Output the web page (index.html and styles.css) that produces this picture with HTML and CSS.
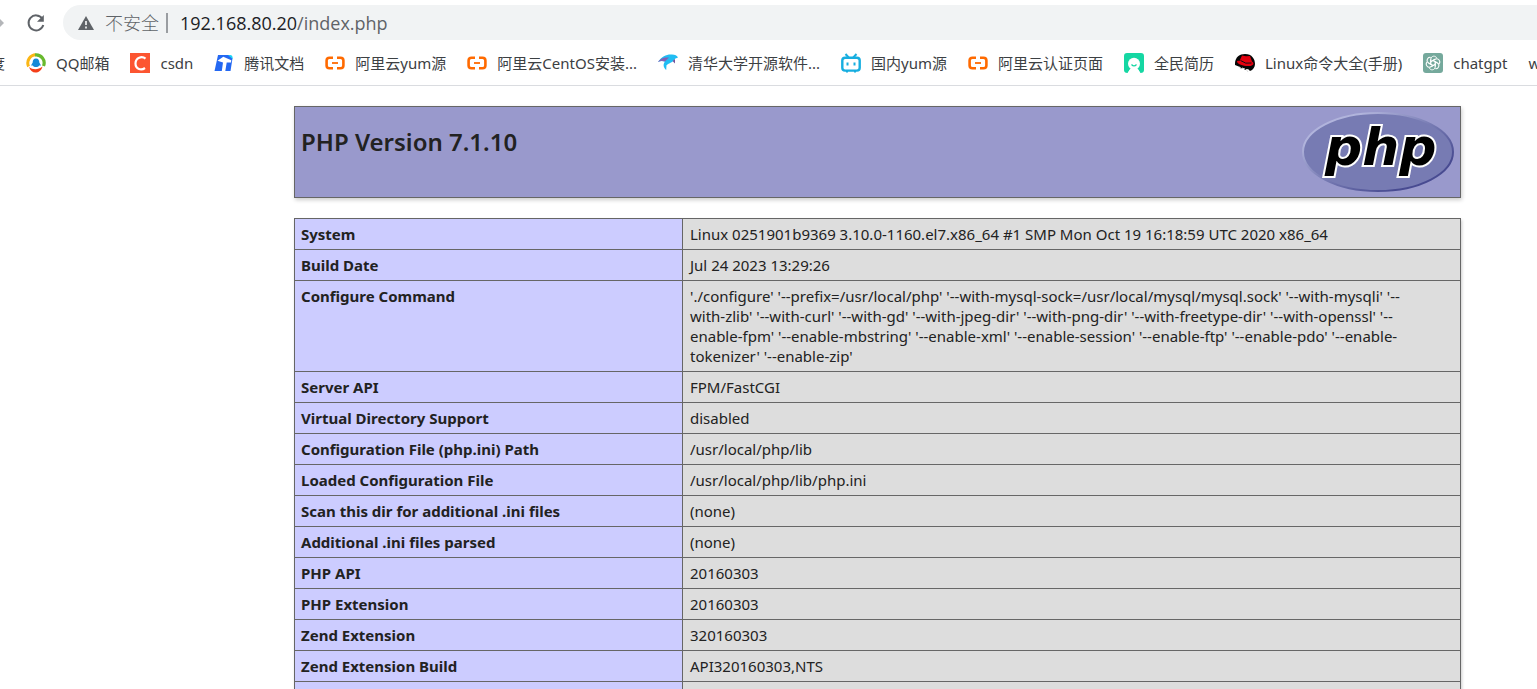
FILE: index.html
```
<!DOCTYPE html>
<html lang="zh-CN">
<head>
<meta charset="utf-8">
<title>phpinfo()</title>
<link rel="stylesheet" href="styles.css">
</head>
<body>
<svg class="defs" width="0" height="0" aria-hidden="true">
  <symbol id="aliyun" viewBox="0 0 20 20">
    <path d="M8 4.800H4.500Q1.600 4.800 1.600 7.600v4.800Q1.600 15.200 4.500 15.200H8M12 4.800h3.500q2.900 0 2.900 2.800v4.800q0 2.800-2.900 2.800H12" fill="none" stroke="#ff6a00" stroke-width="2.600"/>
    <path d="M7 10h6" stroke="#ff6a00" stroke-width="1.800"/>
  </symbol>
</svg>
<header class="browser">
  <div class="toolbar">
    <svg class="forward" viewBox="0 0 4 20" aria-hidden="true"><path d="M0 6l4 4-4 4z" fill="#b4b6b9"/></svg>
    <button class="reload" type="button" aria-label="重新加载">
      <svg viewBox="0 0 20 20"><path d="M16.200 5.500A7.500 7.500 0 1 0 17.300 12" fill="none" stroke="#5f6368" stroke-width="2"/><path d="M17.800 2v6.800H11z" fill="#5f6368"/></svg>
    </button>
    <div class="address">
      <svg class="warning" viewBox="0 0 16 14" aria-hidden="true"><path d="M8 0l8 14H0z" fill="#5f6368"/><path d="M8 5v4M8 10.500v2" stroke="#f1f3f4" stroke-width="1.700"/></svg>
      <span class="insecure">不安全</span>
      <span class="divider"></span>
      <span class="url">192.168.80.20<span class="path">/index.php</span></span>
    </div>
  </div>
  <nav class="bookmarks">
    <a class="bookmark bookmark-cut" href="#">度</a>
    <a class="bookmark" href="#"><svg viewBox="0 0 20 20"><path d="M10 1.800A8.200 8.200 0 0 0 2.600 13.500" fill="none" stroke="#fbb615" stroke-width="3"/><path d="M9 2a8 8 0 0 1 8.500 11" fill="none" stroke="#68b92e" stroke-width="3.200"/><path d="M3 14c4 3 9 3 13.500-.500-1 4-4 6-7 6s-5.500-2-6.500-5.500z" fill="#f43f19"/><path d="M10 5.600c2.500 0 3.300 1.800 3.300 4l1.700 2.800-1.800.2c-1 2-5.400 2-6.400 0L5 12.400l1.700-2.800c0-2.200.8-4 3.300-4z" fill="#168ad8"/></svg>QQ邮箱</a>
    <a class="bookmark" href="#"><svg viewBox="0 0 20 20"><path fill="#fc5531" d="M0 0h20v20H0z"/><path d="M15.500 5.600C12 2.600 5.500 4.400 5.500 10.600c0 6 6 7 9.500 4.400" fill="none" stroke="#fff" stroke-width="2.200"/></svg>csdn</a>
    <a class="bookmark" href="#"><svg viewBox="0 0 20 20"><path d="M4 2h11l3.500 3.200L16.500 18H.5z" fill="#2468f2"/><path d="M14 2h2q3 0 2.600 4z" fill="#16d5f5"/><path d="M3.500 7.800L9.300 3.700l8 3.600-.3 2.200H12.700L11.300 18H7.800L9 9.500z" fill="#fff"/></svg>腾讯文档</a>
    <a class="bookmark" href="#"><svg><use href="#aliyun"/></svg>阿里云yum源</a>
    <a class="bookmark" href="#"><svg><use href="#aliyun"/></svg>阿里云CentOS安装...</a>
    <a class="bookmark" href="#"><svg viewBox="0 0 20 20"><path d="M0 9C4 3 9 1 14 1.500c3 .2 5 1 6 3l-3 1.300c-2 4-6 4-8.500 6.500L8.200 17C5 14 5 11 7 8.500 4 7.500 2 8 0 9z" fill="#20bdf3"/><path d="M0 9c2-3 5-5 11-4.500L7 8.500C4 7.500 2 8 0 9z" fill="#8260b5"/><path d="M14.500 8l2.500 2.500V6z" fill="#75529d"/></svg>清华大学开源软件...</a>
    <a class="bookmark" href="#"><svg viewBox="0 0 20 20"><rect x="1.300" y="4.800" width="17.400" height="12.800" rx="2.800" fill="none" stroke="#17aee0" stroke-width="2.400"/><path d="M4.500 1l3.200 3.500M15.500 1l-3.200 3.500M5 18.500h2M13 18.500h2" stroke="#17aee0" stroke-width="2"/><path d="M6.500 9.500v3M13.500 9.500v3" stroke="#17aee0" stroke-width="2"/></svg>国内yum源</a>
    <a class="bookmark" href="#"><svg><use href="#aliyun"/></svg>阿里云认证页面</a>
    <a class="bookmark" href="#"><svg viewBox="0 0 20 20"><path d="M3 0h14q3 0 3 3v14q0 3-3.500 3L14 16.500H6L3.500 20Q0 20 0 17V3q0-3 3-3z" fill="#15d7a3"/><circle cx="10" cy="10.800" r="6" fill="#fff"/><path d="M4 20q2-6 6-6t6 6z" fill="#fff"/><path d="M7.500 11.500q2.500 2.800 5 0" fill="none" stroke="#15d7a3" stroke-width="1.300"/></svg>全民简历</a>
    <a class="bookmark" href="#"><svg viewBox="0 0 20 20"><path d="M0 12C-.5 5 4 1 10 1c7 0 10 5 10 10 0 3-2 6-5 7l-2-2-3 1-2-2-2 1-1-2z" fill="#060606"/><path d="M4.500 8L7 2.500l4 .8 4-.3 2 5.500c3 2 1 4.500-2.500 4.500C9 13.500 3 11.500 2 8.800 2 7.800 3 7.500 4.500 8z" fill="#e3000f"/><path d="M5.500 7.500q5 4 11 2.500" fill="none" stroke="#111"/><path d="M7 15l3 1M11 16l2 3M4 14l3 2" stroke="#ddd"/></svg>Linux命令大全(手册)</a>
    <a class="bookmark" href="#"><svg viewBox="0 0 20 20"><rect width="20" height="20" rx="3" fill="#75a99c"/><g fill="none" stroke="#fff" stroke-width="1"><path id="petal" d="M7.800 11.300V6.200c0-3.600 5-4 5.900-1M7.800 8.600l4.300-2.500"/><use href="#petal" transform="rotate(60 10 10)"/><use href="#petal" transform="rotate(120 10 10)"/><use href="#petal" transform="rotate(180 10 10)"/><use href="#petal" transform="rotate(240 10 10)"/><use href="#petal" transform="rotate(300 10 10)"/></g></svg>chatgpt</a>
    <a class="bookmark" href="#">w</a>
  </nav>
</header>
<main class="page">
  <section class="banner">
    <h1>PHP Version 7.1.10</h1>
    <svg class="logo" viewBox="0 0 152 82" role="img" aria-label="PHP logo">
      <defs>
        <linearGradient id="rim" x1="0" y1="0" x2="1" y2="1"><stop offset="0.200" stop-color="#b1b4dc"/><stop offset="0.500" stop-color="#777bb3"/><stop offset="0.800" stop-color="#484b91"/></linearGradient>
      </defs>
      <ellipse cx="76" cy="41" rx="75" ry="39" fill="#777bb3" stroke="url(#rim)" stroke-width="2"/>
      <text class="logo-text" x="23" y="54">php</text>
    </svg>
  </section>
  <table class="info">
    <tbody>
      <tr><th scope="row">System</th><td>Linux 0251901b9369 3.10.0-1160.el7.x86_64 #1 SMP Mon Oct 19 16:18:59 UTC 2020 x86_64</td></tr>
      <tr><th scope="row">Build Date</th><td>Jul 24 2023 13:29:26</td></tr>
      <tr><th scope="row">Configure Command</th><td>'./configure' '--prefix=/usr/local/php' '--with-mysql-sock=/usr/local/mysql/mysql.sock' '--with-mysqli' '--<br>with-zlib' '--with-curl' '--with-gd' '--with-jpeg-dir' '--with-png-dir' '--with-freetype-dir' '--with-openssl' '--<br>enable-fpm' '--enable-mbstring' '--enable-xml' '--enable-session' '--enable-ftp' '--enable-pdo' '--enable-<br>tokenizer' '--enable-zip'</td></tr>
      <tr><th scope="row">Server API</th><td>FPM/FastCGI</td></tr>
      <tr><th scope="row">Virtual Directory Support</th><td>disabled</td></tr>
      <tr><th scope="row">Configuration File (php.ini) Path</th><td>/usr/local/php/lib</td></tr>
      <tr><th scope="row">Loaded Configuration File</th><td>/usr/local/php/lib/php.ini</td></tr>
      <tr><th scope="row">Scan this dir for additional .ini files</th><td>(none)</td></tr>
      <tr><th scope="row">Additional .ini files parsed</th><td>(none)</td></tr>
      <tr><th scope="row">PHP API</th><td>20160303</td></tr>
      <tr><th scope="row">PHP Extension</th><td>20160303</td></tr>
      <tr><th scope="row">Zend Extension</th><td>320160303</td></tr>
      <tr><th scope="row">Zend Extension Build</th><td>API320160303,NTS</td></tr>
      <tr><th>&nbsp;</th><td>&nbsp;</td></tr>
    </tbody>
  </table>
</main>
</body>
</html>
```
FILE: styles.css
```
* { box-sizing: border-box; }
body {
  margin: 0;
  height: 100vh;
  overflow: hidden;
  background: #fff;
  color: #222;
  font-family: "Noto Sans", "Noto Sans CJK SC", sans-serif;
  font-size: 15px;
  line-height: 20px;
}
.defs { position: absolute; }
.browser { border-bottom: 1px solid #dadce0; }
.toolbar {
  display: flex;
  align-items: center;
  padding-top: 5px;
}
.forward { width: 4px; height: 20px; }
.reload {
  width: 20px;
  height: 20px;
  margin: 0 17px 0 22px;
  padding: 0;
  border: 0;
  background: none;
}
.reload svg { display: block; width: 20px; height: 20px; }
.address {
  flex: 1;
  display: flex;
  align-items: center;
  height: 35px;
  padding-left: 15px;
  border-radius: 18px 0 0 18px;
  background: #f1f3f4;
  color: #5f6368;
  font-size: 18px;
  font-family: "Open Sans", "Noto Sans CJK SC", sans-serif;
  white-space: nowrap;
}
.insecure { font-weight: 300; }
.warning { width: 16px; height: 14px; margin-right: 11px; }
.divider { width: 2px; height: 20px; margin: 0 12px 0 7px; background: #9a9da1; }
.url { color: #202124; }
.path { color: #5f6368; }
.bookmarks {
  display: flex;
  align-items: center;
  gap: 21px;
  height: 45px;
  overflow: hidden;
}
.bookmark {
  flex: none;
  display: flex;
  align-items: center;
  gap: 10px;
  color: #3c4043;
  text-decoration: none;
  white-space: nowrap;
}
.bookmark svg { width: 20px; height: 20px; }
.bookmark-cut { margin-left: -10px; }
.page { padding: 20px 76px 0 294px; }
.banner {
  display: flex;
  justify-content: space-between;
  align-items: flex-start;
  padding: 4px 6px;
  border: 1px solid #666;
  background: #99c;
  box-shadow: 1px 2px 4px #ccc;
}
.banner h1 {
  margin: 15px 0 0;
  font-size: 24px;
  line-height: 32px;
  font-weight: 600;
}
.logo { width: 152px; height: 82px; }
.logo-text {
  font: italic bold 52px "DejaVu Sans", sans-serif;
  fill: #000;
  stroke: #fff;
  stroke-width: 4px;
  paint-order: stroke;
}
.info {
  width: 100%;
  margin-top: 20px;
  border-collapse: collapse;
  box-shadow: 1px 2px 3px #ccc;
}
.info th, .info td {
  padding: 5px 6px;
  border: 1px solid #666;
  text-align: left;
  vertical-align: top;
}
.info th { width: 388px; background: #ccf; font-weight: 700; }
.info td { padding-left: 7px; background: #ddd; }
```
